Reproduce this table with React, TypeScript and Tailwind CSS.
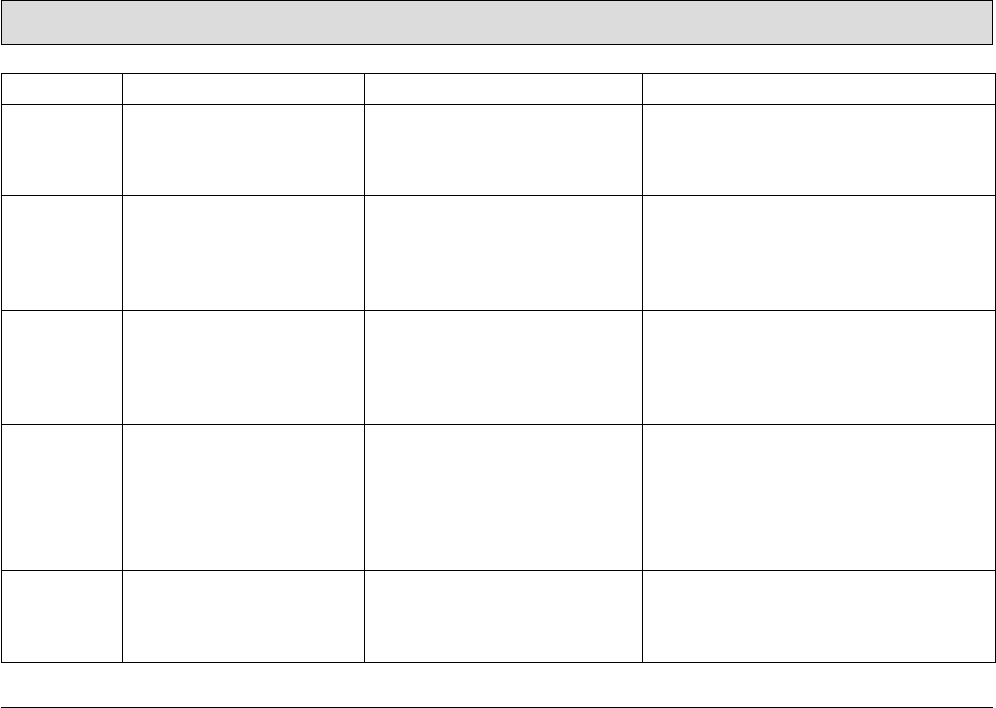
const columns = ['w-[121px]', 'w-[242px]', 'w-[278px]', 'w-[352px]'];

const rows = [
  { key: 'head', height: 'h-[31px]' },
  { key: 'r1', height: 'h-[91px]' },
  { key: 'r2', height: 'h-[115px]' },
  { key: 'r3', height: 'h-[114px]' },
  { key: 'r4', height: 'h-[146px]' },
  { key: 'r5', height: 'h-[92px]' },
];

function Row({ height }: { height: string }) {
  return (
    <div className={`flex border-b border-black ${height}`}>
      {columns.map((w, i) => (
        <div
          key={i}
          className={`${w} shrink-0 ${i < columns.length - 1 ? 'border-r border-black' : ''}`}
        />
      ))}
    </div>
  );
}

export default function App() {
  return (
    <div className="flex h-[708px] w-[996px] flex-col bg-white font-['Liberation_Sans',sans-serif]">
      <div className="ml-[1px] h-[45px] w-[992px] border border-black bg-[#dcdcdc]" />

      <div className="ml-[1px] mt-[28px] w-[995px] border-x border-t border-black">
        {rows.map((row) => (
          <Row key={row.key} height={row.height} />
        ))}
      </div>

      <div className="ml-[1px] mt-[44px] w-[992px] border-t border-black" />
    </div>
  );
}
